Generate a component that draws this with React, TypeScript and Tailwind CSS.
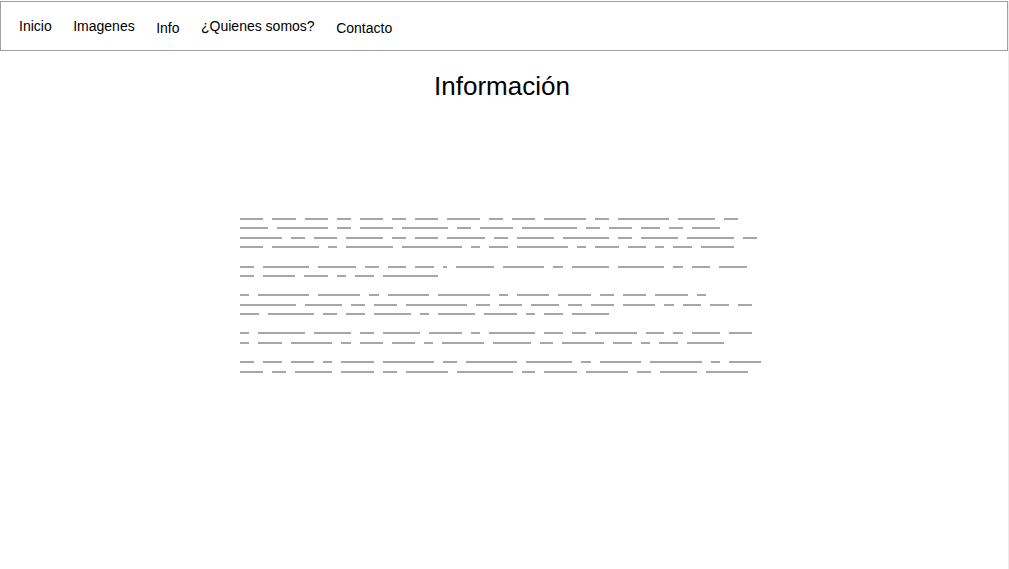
const navItems = [
  { label: 'Inicio', low: false },
  { label: 'Imagenes', low: false },
  { label: 'Info', low: true },
  { label: '¿Quienes somos?', low: false },
  { label: 'Contacto', low: true },
];

// word lengths (in character units) for each line of the placeholder text
const paragraphs: number[][][] = [
  [
    [5, 5, 5, 3, 5, 3, 5, 7, 3, 5, 9, 3, 11, 8, 3],
    [6, 11, 3, 7, 10, 3, 7, 12, 3, 5, 4, 3, 6],
    [9, 3, 5, 8, 3, 5, 8, 3, 8, 10, 3, 8, 10, 3],
    [5, 10, 2, 10, 13, 2, 4, 11, 2, 5, 4, 2, 4, 7],
  ],
  [
    [3, 10, 8, 3, 4, 4, 1, 8, 9, 2, 8, 10, 2, 4, 6],
    [3, 7, 5, 2, 4, 12],
  ],
  [
    [2, 11, 9, 2, 9, 11, 2, 7, 7, 3, 5, 7, 2],
    [12, 8, 3, 5, 13, 3, 5, 6, 3, 5, 7, 2, 4, 4, 3],
    [4, 10, 3, 4, 8, 2, 8, 7, 2, 4, 8],
  ],
  [
    [2, 10, 8, 3, 8, 7, 2, 10, 4, 3, 9, 4, 2, 6, 5],
    [2, 5, 9, 2, 5, 5, 2, 9, 8, 3, 9, 4, 2, 4, 8],
  ],
  [
    [3, 4, 5, 2, 7, 11, 3, 11, 10, 2, 9, 11, 2, 7],
    [5, 3, 8, 7, 3, 9, 12, 3, 7, 9, 3, 8, 9],
  ],
];

const UNIT = 4.65;

function GreekedLine({ words }: { words: number[] }) {
  return (
    <div className="flex h-[9.55px] items-center gap-[9px]">
      {words.map((n, i) => (
        <span
          key={i}
          className="block h-[2px] shrink-0 bg-[#a6a6a6]"
          style={{ width: `${n * UNIT}px` }}
        />
      ))}
    </div>
  );
}

export default function App() {
  return (
    <div
      className="h-[569px] w-full border-r border-b border-[#ebebeb] bg-white text-black"
      style={{ fontFamily: '"Liberation Sans", Arial, sans-serif' }}
    >
      <nav className="mt-[1px] flex h-[50px] items-start gap-[21.5px] border border-[#a0a0a0] pt-[16px] pl-[18px] text-[14px] leading-[16px]">
        {navItems.map((item) => (
          <a
            key={item.label}
            href="#"
            className={item.low ? 'mt-[1.5px] text-black' : 'text-black'}
          >
            {item.label}
          </a>
        ))}
      </nav>

      <h1 className="mt-[20px] pr-[4px] text-center text-[26px] leading-[30px] font-normal">
        Información
      </h1>

      <div className="mt-[113px] flex justify-center">
        <div className="w-[522px] -translate-x-[3px]">
          {paragraphs.map((lines, p) => (
            <div key={p} className="mb-[9.55px]">
              {lines.map((words, l) => (
                <GreekedLine key={l} words={words} />
              ))}
            </div>
          ))}
        </div>
      </div>
    </div>
  );
}
